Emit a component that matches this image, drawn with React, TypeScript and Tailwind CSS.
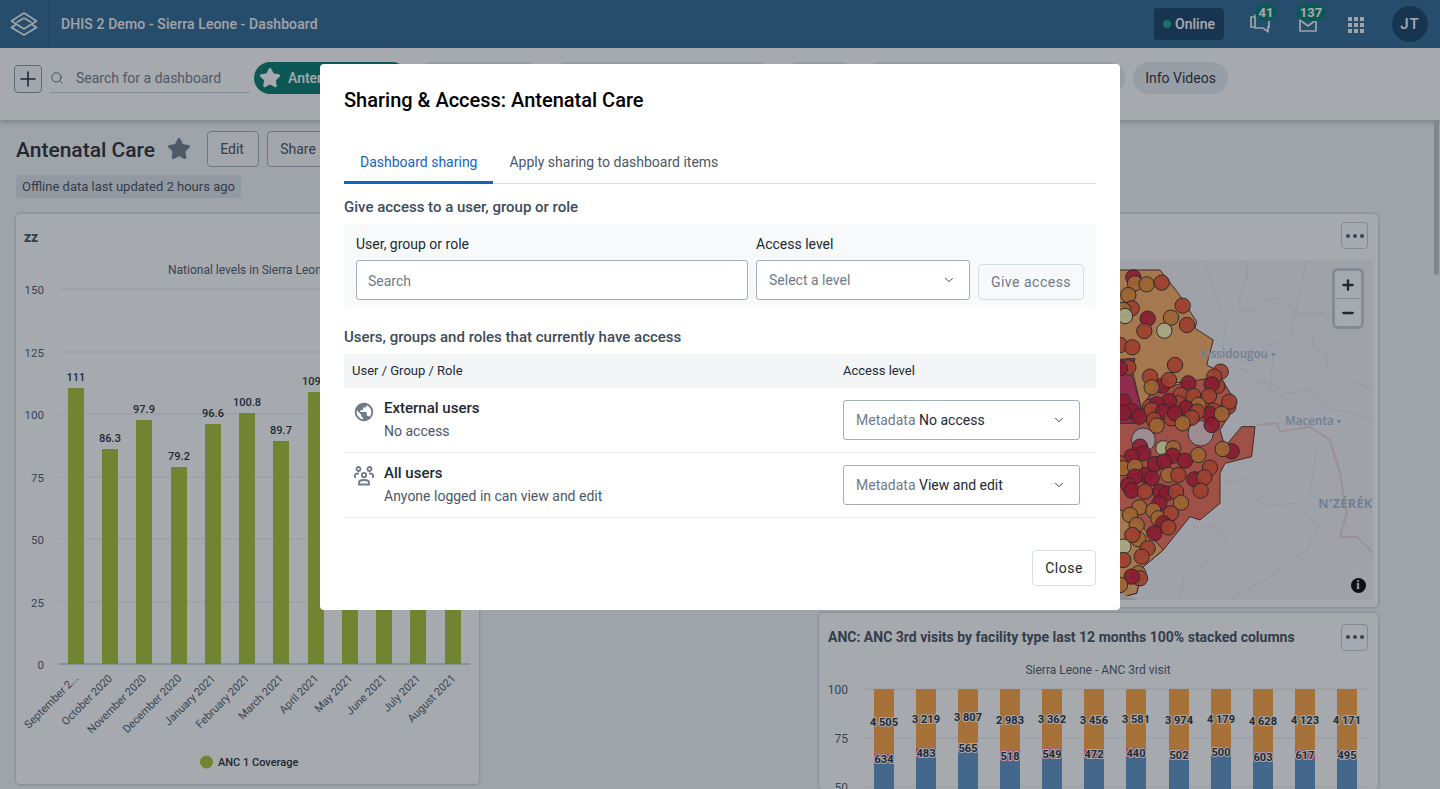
import React from 'react';
import { ChevronDown, Search, Star, Plus, Minus } from 'lucide-react';
import { MdPublic } from 'react-icons/md';

const monthBars = [
    { label: 'September 2...', value: '111', x: 68, top: 388 },
    { label: 'October 2020', value: '86.3', x: 102, top: 449 },
    { label: 'November 2020', value: '97.9', x: 136, top: 420 },
    { label: 'December 2020', value: '79.2', x: 171, top: 467 },
    { label: 'January 2021', value: '96.6', x: 205, top: 424 },
    { label: 'February 2021', value: '100.8', x: 239, top: 413 },
    { label: 'March 2021', value: '89.7', x: 273, top: 441 },
    { label: 'April 2021', value: '109.6', x: 308, top: 392 },
    { label: 'May 2021', value: '', x: 342, top: 420 },
    { label: 'June 2021', value: '', x: 376, top: 420 },
    { label: 'July 2021', value: '', x: 410, top: 420 },
    { label: 'August 2021', value: '', x: 445, top: 420 },
];

const stackedBars = [
    { x: 874, orange: '4 505', red: '634', split: 753.3, blue: 763.3, oy: 722, ry: 759 },
    { x: 916, orange: '3 219', red: '483', split: 747.3, blue: 757.3, oy: 719, ry: 753 },
    { x: 958, orange: '3 807', red: '565', split: 743.3, blue: 752.3, oy: 717.3, ry: 748 },
    { x: 1000, orange: '2 983', red: '518', split: 750.3, blue: 762, oy: 720.3, ry: 756.3 },
    { x: 1042, orange: '3 362', red: '549', split: 748.3, blue: 758.7, oy: 719, ry: 753.7 },
    { x: 1084, orange: '3 456', red: '472', split: 749.3, blue: 758.7, oy: 720.3, ry: 754 },
    { x: 1126, orange: '3 581', red: '440', split: 748, blue: 757, oy: 719, ry: 753 },
    { x: 1169, orange: '3 974', red: '502', split: 750, blue: 759.7, oy: 720.3, ry: 755 },
    { x: 1211, orange: '4 179', red: '500', split: 747, blue: 755.7, oy: 719, ry: 752.3 },
    { x: 1253, orange: '4 628', red: '603', split: 752.3, blue: 761.7, oy: 721, ry: 757 },
    { x: 1295, orange: '4 123', red: '617', split: 749.3, blue: 759, oy: 720.3, ry: 755 },
    { x: 1337, orange: '4 171', red: '495', split: 750, blue: 758.7, oy: 720.3, ry: 755 },
];

// map points, in 3x crop coordinates: x, y, colour
const D = '#cc142f';
const R = '#f0502a';
const O = '#f08c32';
const P = '#ffffbf';
const mapPoints: [number, number, string][] = [
    [70, 52, D], [75, 70, O], [110, 73, O], [155, 68, R], [55, 105, O], [218, 137, R], [65, 145, R], [40, 150, O], [45, 168, P],
    [113, 176, D], [183, 173, O], [103, 213, R], [163, 212, P], [231, 195, R], [30, 255, R], [67, 262, R], [55, 322, R], [30, 325, D],
    [322, 378, R], [332, 335, R], [313, 350, R], [195, 315, R], [120, 350, R], [157, 377, D], [125, 382, O], [177, 360, R], [235, 370, D], [305, 373, D],
    [212, 405, R], [250, 408, R], [297, 408, R], [355, 440, R], [358, 425, R], [120, 440, R], [205, 430, R], [265, 435, O], [228, 445, D], [177, 423, D], [140, 433, D],
    [310, 452, R], [40, 425, D], [65, 453, D], [40, 458, D], [88, 470, D], [125, 450, R], [160, 455, D], [185, 475, R], [195, 460, D], [300, 462, D], [335, 462, O],
    [262, 455, R], [245, 473, R], [218, 490, O], [132, 480, R], [140, 497, O], [305, 495, D],
    [90, 560, D], [160, 565, P], [100, 580, D], [65, 590, D], [190, 565, O], [188, 587, D], [225, 602, D], [265, 585, O], [365, 574, D], [338, 567, O],
    [300, 623, R], [253, 658, D], [283, 652, R], [272, 692, R], [135, 612, D], [30, 610, R], [40, 625, O], [75, 620, O], [162, 605, D], [105, 645, D], [75, 650, D],
    [125, 655, D], [175, 645, O], [205, 645, R], [55, 675, D], [65, 692, D], [105, 695, R], [150, 695, D], [170, 700, D], [198, 695, R], [213, 728, O], [148, 730, D],
    [88, 742, O], [130, 752, O], [60, 765, O], [145, 775, O], [183, 760, R], [80, 795, O], [160, 790, D], [175, 802, R], [133, 820, D], [85, 838, O], [67, 825, R],
    [113, 865, R], [95, 890, R], [40, 860, P], [40, 900, R], [85, 940, O], [90, 955, R], [65, 950, D], [30, 975, O],
];

function HeaderBar() {
    return (
        <header className="flex h-12 items-center bg-[#2c6693] text-white">
            <div className="flex h-12 w-[49px] items-center justify-center border-r border-[#255a83]">
                <svg width="28" height="24" viewBox="0 0 28 24" fill="none" stroke="#f4f6f8" strokeWidth="1.7" strokeLinejoin="round">
                    <path d="M14 1 L26.5 9 L14 17 L1.5 9 Z" />
                    <path d="M14 6 L21.5 10.5" />
                    <path d="M6.5 10.5 L14 6" />
                    <path d="M6 12.5 L1.5 15.5 L14 23 L26.5 15.5 L22 12.5" />
                </svg>
            </div>
            <span className="ml-3 text-sm font-medium tracking-[0.1px] text-[#f4f6f8]">DHIS 2 Demo - Sierra Leone - Dashboard</span>
            <div className="ml-auto flex h-8 w-[70px] items-center justify-center gap-1 rounded bg-[#113e65] text-sm font-medium">
                <span className="size-2 rounded-full bg-[#18a08e]" />
                Online
            </div>
            <div className="relative ml-[26px] size-[20px]">
                <svg width="20" height="19" viewBox="0 0 20 19" fill="none" stroke="#f4f6f8" strokeWidth="1.7">
                    <path d="M4 3 H1 V13 H4" />
                    <path d="M5 1 H19 V13 H18 V17.5 L13 14 H5 Z" />
                </svg>
                <span className="absolute -top-[10px] left-[5px] flex h-[17px] w-[22px] items-center justify-center rounded-full bg-[#00796b] text-[13px] font-bold">41</span>
            </div>
            <div className="relative ml-[29px] mt-[2px] h-[14px] w-[18px]">
                <svg width="18" height="14" viewBox="0 0 18 14" fill="none" stroke="#f4f6f8" strokeWidth="1.7">
                    <path d="M1 1 H17 V13 H1 Z" />
                    <path d="M1 2 L9 8 L17 2" />
                </svg>
                <span className="absolute -top-[14px] -left-[3px] flex h-[17px] w-[30px] items-center justify-center rounded-full bg-[#00796b] text-[13px] font-bold">137</span>
            </div>
            <svg width="16" height="16" viewBox="0 0 16 16" fill="#f4f6f8" className="ml-[31px] mt-[2px]">
                {[0, 6, 12].map(y =>
                    [0, 6, 12].map(x => <rect key={`${x}-${y}`} x={x} y={y} width="4" height="4" />)
                )}
            </svg>
            <div className="ml-[28px] mr-[12px] flex size-9 items-center justify-center rounded-full bg-[#113e65] text-[15px] font-medium tracking-[1px]">JT</div>
        </header>
    );
}

function Chip({ width, label, active }: { width: string; label: string; active?: boolean }) {
    return (
        <div className={`flex h-8 items-center rounded-full text-sm ${width} ${active ? 'gap-[7px] bg-[#00796b] pl-[5px] font-medium text-white' : 'justify-center bg-[#e8edf2] text-[#212934]'}`}>
            {active && <Star size={22} fill="white" stroke="white" />}
            <span className="truncate">{label}</span>
        </div>
    );
}

function Toolbar() {
    return (
        <div className="relative flex h-[72px] items-start bg-white pl-[14px] pt-[14px] shadow-[0_2px_6px_rgba(33,41,52,0.3)]">
            <button className="mt-[3px] flex size-7 items-center justify-center rounded border border-[#8a97a6] bg-[#fbfcfd] text-[#212934]">
                <Plus size={24} strokeWidth={1.6} />
            </button>
            <div className="ml-2 mt-[3px] flex h-[28px] w-[200px] items-center border-b border-[#c4cdd6] pb-[2px] text-sm text-[#6e7a8a]">
                <Search size={14} strokeWidth={1.5} className="text-[#4a5768]" />
                <span className="ml-[12px]">Search for a dashboard</span>
            </div>
            <div className="ml-1 flex gap-2">
                <Chip width="w-[154px]" label="Antenatal Care" active />
                <Chip width="w-[126px]" label="Cases Malaria" />
                <Chip width="w-[224px]" label="Disease Surveillance" />
                <Chip width="w-[74px]" label="Delivery" />
                <Chip width="w-[261px]" label="Immunization" />
                <Chip width="w-[95px]" label="Info Videos" />
            </div>
        </div>
    );
}

function MoreButton() {
    return (
        <button className="flex h-[27px] w-[27px] items-center justify-center gap-[3px] rounded border border-[#c4cdd6] bg-transparent">
            <span className="size-[4px] rounded-full bg-[#4a5768]" />
            <span className="size-[4px] rounded-full bg-[#4a5768]" />
            <span className="size-[4px] rounded-full bg-[#4a5768]" />
        </button>
    );
}

function CoverageChart() {
    return (
        <svg width="463" height="539" viewBox="16 245 463 539" fontFamily="Roboto, sans-serif" className="block">
            <text x="168" y="274" fontSize="12" fill="#4a5768">National levels in Sierra Leone</text>
            {[
                [289, '150'], [352, '125'], [414, '100'], [477, '75'], [539, '50'], [602, '25'], [664, '0'],
            ].map(([y, tick]) => (
                <g key={tick}>
                    <line x1="59" x2="470" y1={y} y2={y} stroke={tick === '0' ? '#a0adba' : '#e8eaed'} />
                    <text x="44" y={Number(y) + 5} fontSize="11.5" textAnchor="end" fill="#4a5768">{tick}</text>
                </g>
            ))}
            {monthBars.map(bar => (
                <g key={bar.label}>
                    <rect x={bar.x} y={bar.top} width="16" height={664 - bar.top} fill="#a9c22f" />
                    <text x={bar.x + 8} y={bar.top - 7} fontSize="11" fontWeight="500" textAnchor="middle" fill="#212934">{bar.value}</text>
                    <text
                        x={bar.x + 11}
                        y={679}
                        fontSize="11"
                        textAnchor="end"
                        fill="#4a5768"
                        transform={`rotate(-45 ${bar.x + 11} 679)`}
                    >
                        {bar.label}
                    </text>
                </g>
            ))}
            <circle cx="206.5" cy="762" r="6.5" fill="#a9c22f" />
            <text x="218" y="766" fontSize="11" fontWeight="500" fill="#212934">ANC 1 Coverage</text>
        </svg>
    );
}

function StackedChart() {
    return (
        <svg width="558" height="128" viewBox="819 661 558 128" fontFamily="Roboto, sans-serif" className="block">
            <text x="1098" y="674" fontSize="12" textAnchor="middle" fill="#4a5768">Sierra Leone - ANC 3rd visit</text>
            {[
                [689, '100'], [738, '75'], [787, '50'],
            ].map(([y, tick]) => (
                <g key={tick}>
                    <line x1="863" x2="1368" y1={y} y2={y} stroke="#e8eaed" />
                    <text x="848" y={Number(y) + 5} fontSize="12" textAnchor="end" fill="#4a5768">{tick}</text>
                </g>
            ))}
            {stackedBars.map(bar => (
                <g key={bar.x}>
                    <rect x={bar.x} y="689" width="20" height={bar.split - 689} fill="#ffa33e" />
                    <rect x={bar.x} y={bar.split} width="20" height={bar.blue - bar.split} fill="#ff6078" />
                    <rect x={bar.x} y={bar.blue} width="20" height={789 - bar.blue} fill="#5c92c6" />
                    <g fontSize="11" fontWeight="700" textAnchor="middle" fill="#212934" stroke="white" strokeWidth="2" paintOrder="stroke">
                        <text x={bar.x + 10} y={bar.oy + 4}>{bar.orange}</text>
                        <text x={bar.x + 10} y={bar.ry + 4}>{bar.red}</text>
                    </g>
                </g>
            ))}
        </svg>
    );
}

function MapView() {
    return (
        <div className="relative ml-[7px] mr-[5px] h-[340px] overflow-hidden bg-[#f3f4f7]">
            <svg width="547" height="340" viewBox="826 260 547 340" className="block">
                <g transform="translate(1110 260) scale(0.3333)" fontFamily="'Open Sans', sans-serif">
                    <g fill="none" stroke="#e3e6ea" strokeWidth="3">
                        <path d="M280 0 L350 190 L335 280 L420 310 L490 280 L480 390 L560 430" />
                        <path d="M590 0 L540 230 L470 260" />
                        <path d="M620 560 L600 700 L720 800" />
                        <path d="M760 90 L640 150 L540 230" />
                    </g>
                    <g fill="none" stroke="#ecc6ca" strokeWidth="3" strokeDasharray="5 6">
                        <path d="M410 0 L410 60 L390 110 L390 150 L430 155 L460 120 L510 115 L560 160 L640 160 L660 170 L610 220 L610 265 L650 280 L650 320 L700 350 L790 390" />
                        <path d="M360 320 L410 330 L425 360 L510 380 L530 400 L610 390 L640 440 L790 475" />
                        <path d="M330 670 L415 655 L440 720 L480 735 L560 730 L625 800 L590 870 L480 950 L360 1020" />
                        <path d="M250 800 L325 800 L355 860 L220 960 L210 1020" />
                    </g>
                    <path d="M440 495 L500 490 L510 515 L600 500 L660 540 L690 640 L710 760 L690 830 L740 830 L790 880" fill="none" stroke="#f0d5d7" strokeWidth="6" />
                    <g stroke="#5a2a1e" strokeWidth="3" strokeLinejoin="round">
                        <path d="M0 30 L150 30 L205 100 L260 185 L255 205 L310 240 L290 315 L330 335 L270 365 L235 365 L180 370 L125 395 L95 450 L60 300 L0 300 Z" fill="#fdae61" />
                        <path d="M0 300 L75 295 L65 340 L95 450 L75 490 L0 490 Z" fill="#dd2f62" />
                        <path d="M0 490 L75 490 L95 450 L125 395 L235 365 L330 350 L380 430 L330 510 L345 560 L395 500 L435 500 L425 590 L345 610 L330 640 L330 730 L270 780 L240 770 L160 870 L100 920 L80 1000 L0 1020 Z" fill="#f46d55" />
                        <path d="M0 740 L60 760 L160 870 L100 920 L80 1000 L0 1020 Z" fill="#fdae61" />
                    </g>
                    <path d="M30 1000 L85 1020 H30 Z" fill="#d3d9de" />
                    <circle cx="100" cy="540" r="36" fill="#eee3ea" fillOpacity="0.85" stroke="#46343a" strokeWidth="3" />
                    <circle cx="272" cy="520" r="38" fill="#eee3ea" fillOpacity="0.85" stroke="#46343a" strokeWidth="3" />
                    {mapPoints.map(([cx, cy, color], index) => (
                        <circle key={index} cx={cx} cy={cy} r="23" fill={color} fillOpacity="0.9" stroke="#3b2a25" strokeWidth="3" />
                    ))}
                    <text x="270" y="295" fontSize="35" fontWeight="600" fill="#a9bad3">Kissidougou ▪</text>
                    <text x="525" y="495" fontSize="35" fontWeight="600" fill="#a9bad3">Macenta ▪</text>
                    <text x="625" y="745" fontSize="38" fontWeight="700" letterSpacing="1" fill="#a9bad3">N'ZÉRÉK</text>
                </g>
            </svg>
            <div className="absolute right-[9px] top-[8px] flex h-[61px] w-[32px] flex-col rounded-md border-[3px] border-[#c9ccd1] bg-white text-[#212934]">
                <span className="flex flex-1 items-center justify-center border-b border-[#c4cdd6]">
                    <Plus size={16} strokeWidth={3.5} />
                </span>
                <span className="flex flex-1 items-center justify-center">
                    <Minus size={16} strokeWidth={3.5} />
                </span>
            </div>
            <div className="absolute bottom-[1px] right-[1px] flex size-[28px] items-center justify-center rounded-full bg-[#f5f6f8]">
                <span className="flex size-[15px] items-center justify-center rounded-full bg-black text-[12px] font-bold leading-none text-white [font-family:'Liberation_Serif',serif]">i</span>
            </div>
        </div>
    );
}

function Dashboard() {
    return (
        <main className="pl-4 pr-[62px]">
            <div className="flex h-[36px] items-center mt-[11px] text-[#212934]">
                <h1 className="pt-[3px] text-[21px] font-medium">Antenatal Care</h1>
                <Star size={24} fill="#6e7a8a" stroke="#6e7a8a" className="ml-3" />
                <button className="ml-4 h-9 w-[52px] rounded border border-[#a0adba] bg-[#fbfcfd] pr-[2px] text-sm text-[#404b5a]">Edit</button>
                <button className="ml-2 h-9 w-[66px] rounded border border-[#a0adba] bg-[#fbfcfd] pr-[4px] text-sm text-[#404b5a]">Share</button>
            </div>
            <div className="mt-2 flex h-[23px] w-[225px] items-center justify-center rounded bg-[#e0e4ea] text-[13px] text-[#404b5a]">
                Offline data last updated 2 hours ago
            </div>
            <div className="mt-4 flex justify-between">
                <section className="h-[570px] w-[463px] rounded bg-white shadow-[0_0_3px_rgba(33,41,52,0.4)]">
                    <h3 className="px-2 pt-[15px] text-sm font-bold leading-4 text-[#404b5a]">zz</h3>
                    <CoverageChart />
                </section>
                <div className="flex w-[559px] flex-col gap-[6px]">
                    <section className="h-[393px] rounded bg-white pt-2 shadow-[0_0_3px_rgba(33,41,52,0.4)]">
                        <div className="flex h-[38px] justify-end pr-[10px]">
                            <MoreButton />
                        </div>
                        <MapView />
                    </section>
                    <section className="h-[176px] rounded bg-white shadow-[0_0_3px_rgba(33,41,52,0.4)]">
                        <div className="flex h-[48px] items-center justify-between pl-[9px] pr-[10px]">
                            <h3 className="text-sm font-bold text-[#404b5a]">ANC: ANC 3rd visits by facility type last 12 months 100% stacked columns</h3>
                            <MoreButton />
                        </div>
                        <StackedChart />
                    </section>
                </div>
            </div>
        </main>
    );
}

function SelectBox({ children, className }: { children: React.ReactNode; className: string }) {
    return (
        <div className={`flex h-10 items-center justify-between rounded-[3px] border border-[#a0adba] bg-white pl-3 pr-[13px] text-sm ${className}`}>
            <span>{children}</span>
            <ChevronDown size={14} strokeWidth={1.5} className="text-[#212934]" />
        </div>
    );
}

function UsersIcon() {
    return (
        <svg width="20" height="20" viewBox="0 0 20 20" fill="none" stroke="#6e7a8a" strokeWidth="1.8">
            <circle cx="4.5" cy="3" r="2" />
            <circle cx="15.5" cy="3" r="2" />
            <circle cx="10" cy="9" r="2.2" />
            <path d="M1 12 V9.5 C1 8 2.5 7.3 5 7.5" />
            <path d="M19 12 V9.5 C19 8 17.5 7.3 15 7.5" />
            <path d="M5 18.5 V16.5 C5 14.7 7 14 10 14 C13 14 15 14.7 15 16.5 V18.5 Z" />
        </svg>
    );
}

function AccessRow({ icon, name, detail, level }: { icon: React.ReactNode; name: string; detail: string; level: string }) {
    return (
        <div className="flex h-[65px] items-center border-b border-[#e8edf2]">
            <div className="flex h-full w-[40px] justify-center pt-[13px]">{icon}</div>
            <div className="w-[459px] pb-[2px]">
                <div className="text-[15px] font-medium leading-[20px] text-[#212934]">{name}</div>
                <div className="mt-[3px] text-sm leading-[20px] text-[#4a5768]">{detail}</div>
            </div>
            <SelectBox className="w-[237px]">
                <span className="text-[#6e7a8a]">Metadata</span> <span className="text-[#212934]">{level}</span>
            </SelectBox>
        </div>
    );
}

function SharingDialog() {
    return (
        <div className="fixed inset-0 flex justify-center bg-[#212934]/40">
            <div className="mt-16 h-[546px] w-[800px] rounded bg-white px-6 pt-[22px]">
                <h2 className="text-xl leading-7 font-medium text-black">Sharing &amp; Access: Antenatal Care</h2>
                <div className="mt-[30px] flex h-[40px] border-b border-[#d5dde5] text-sm">
                    <div className="flex h-[40px] items-center border-b-[3px] border-[#1565c0] px-4 pb-[2px] text-[#1565c0]">Dashboard sharing</div>
                    <div className="flex h-[40px] items-center px-4 pb-[5px] text-[#4a5768]">Apply sharing to dashboard items</div>
                </div>
                <h3 className="mt-[13px] text-[15px] leading-5 font-medium text-[#404b5a]">Give access to a user, group or role</h3>
                <div className="mt-[7px] flex h-[83px] items-end rounded bg-[#f8f9fa] px-3 pb-[7px]">
                    <div className="w-[392px]">
                        <div className="mb-[6px] text-sm leading-5 text-[#212934]">User, group or role</div>
                        <div className="flex h-10 items-center rounded-[3px] border border-[#a0adba] bg-white px-[11px] pt-[2px] text-sm text-[#6e7a8a]">Search</div>
                    </div>
                    <div className="ml-2 w-[214px]">
                        <div className="mb-[6px] text-sm leading-5 text-[#212934]">Access level</div>
                        <SelectBox className="text-[#6e7a8a]">Select a level</SelectBox>
                    </div>
                    <button className="ml-2 h-9 w-[106px] rounded border border-[#d5dde5] bg-[#f8f9fa] text-sm tracking-[0.5px] text-[#6e7a8a]">Give access</button>
                </div>
                <h3 className="mt-5 text-[15px] leading-5 font-medium text-[#404b5a]">Users, groups and roles that currently have access</h3>
                <div className="mt-[7px] flex h-[34px] items-center bg-[#f3f5f7] pl-2 text-[13px] text-[#212934]">
                    <span className="w-[491px]">User / Group / Role</span>
                    <span>Access level</span>
                </div>
                <AccessRow icon={<MdPublic size={22} className="text-[#6e7a8a]" />} name="External users" detail="No access" level="No access" />
                <AccessRow icon={<UsersIcon />} name="All users" detail="Anyone logged in can view and edit" level="View and edit" />
                <div className="mt-8 flex justify-end">
                    <button className="h-9 w-[64px] rounded border border-[#d5dde5] bg-white text-sm tracking-[0.5px] text-[#212934]">Close</button>
                </div>
            </div>
        </div>
    );
}

export default function App() {
    return (
        <div className="relative h-[789px] w-[1440px] overflow-hidden bg-[#f4f6f8] [font-family:Roboto,sans-serif]">
            <HeaderBar />
            <Toolbar />
            <Dashboard />
            <div className="absolute right-[1px] top-[120px] h-[155px] w-[5px] rounded-full bg-[#c1c3c7]" />
            <SharingDialog />
        </div>
    );
}
